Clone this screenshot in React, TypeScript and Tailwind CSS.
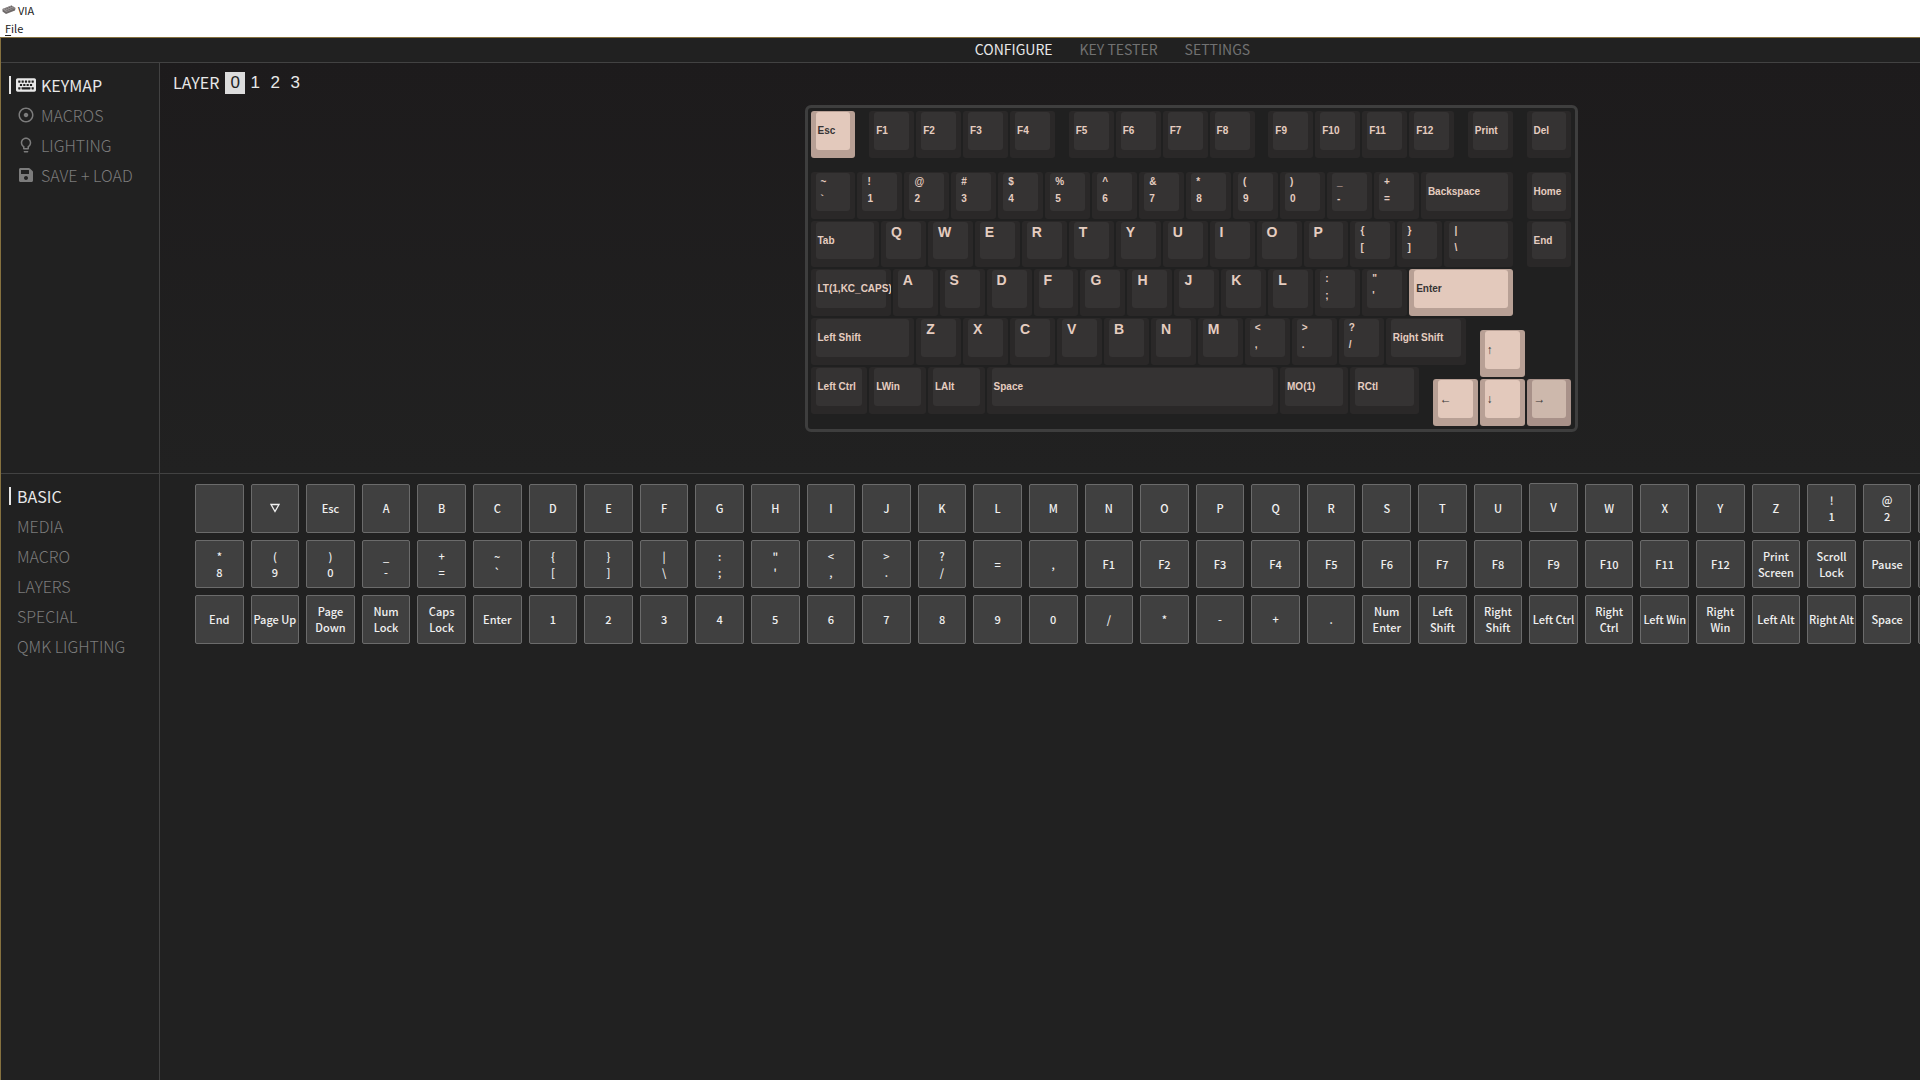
import React from "react";
import { FaKeyboard, FaSave } from "react-icons/fa";
import { MdAdjust, MdLightbulbOutline } from "react-icons/md";

const sans = "font-['Noto_Sans_CJK_SC','Noto_Sans',sans-serif]";
const arial = "font-['Liberation_Sans',Arial,sans-serif]";

type Tone = "dark" | "light" | "selected";
type Cap = { x: number; y: number; w: number; label: string; tone: Tone };

const cap = (x: number, y: number, w: number, label: string, tone: Tone = "dark"): Cap => ({ x, y, w, label, tone });
const run = (x: number, y: number, labels: string[]) => labels.map((l, i) => cap(x + i, y, 1, l));

/* Positions and widths are in key units. */
const caps: Cap[] = [
  cap(0, 0, 1, "Esc", "light"),
  ...run(1.25, 0, ["F1", "F2", "F3", "F4"]),
  ...run(5.5, 0, ["F5", "F6", "F7", "F8"]),
  ...run(9.75, 0, ["F9", "F10", "F11", "F12"]),
  cap(14, 0, 1, "Print"),
  cap(15.25, 0, 1, "Del"),
  ...run(0, 1.25, ["~\n`", "!\n1", "@\n2", "#\n3", "$\n4", "%\n5", "^\n6", "&\n7", "*\n8", "(\n9", ")\n0", "_\n-", "+\n="]),
  cap(13, 1.25, 2, "Backspace"),
  cap(15.25, 1.25, 1, "Home"),
  cap(0, 2.25, 1.5, "Tab"),
  ...run(1.5, 2.25, ["Q", "W", "E", "R", "T", "Y", "U", "I", "O", "P", "{\n[", "}\n]"]),
  cap(13.5, 2.25, 1.5, "|\n\\"),
  cap(15.25, 2.25, 1, "End"),
  cap(0, 3.25, 1.75, "LT(1,KC_CAPS)"),
  ...run(1.75, 3.25, ["A", "S", "D", "F", "G", "H", "J", "K", "L", ":\n;", "\"\n'"]),
  cap(12.75, 3.25, 2.25, "Enter", "light"),
  cap(0, 4.25, 2.25, "Left Shift"),
  ...run(2.25, 4.25, ["Z", "X", "C", "V", "B", "N", "M", "<\n,", ">\n.", "?\n/"]),
  cap(12.25, 4.25, 1.75, "Right Shift"),
  cap(14.25, 4.5, 1, "↑", "light"),
  cap(0, 5.25, 1.25, "Left Ctrl"),
  cap(1.25, 5.25, 1.25, "LWin"),
  cap(2.5, 5.25, 1.25, "LAlt"),
  cap(3.75, 5.25, 6.25, "Space"),
  cap(10, 5.25, 1.5, "MO(1)"),
  cap(11.5, 5.25, 1.5, "RCtl"),
  cap(13.25, 5.5, 1, "←", "light"),
  cap(14.25, 5.5, 1, "↓", "light"),
  cap(15.25, 5.5, 1, "→", "selected"),
];

const baseTone: Record<Tone, string> = {
  dark: "bg-[#2a2828] text-[#e5cdc0]",
  light: "bg-[#b8a095] text-[#363434]",
  selected: "bg-[#a89189] text-[#363434]",
};
const topTone: Record<Tone, string> = {
  dark: "bg-[#353333]",
  light: "bg-[#e3c9bc]",
  selected: "bg-[#cdb8ac]",
};

function Legend({ label }: { label: string }) {
  if (label.includes("\n")) {
    const [a, b] = label.split("\n");
    return (
      <span className="flex flex-col pl-[5px] text-[10px] leading-[17px]">
        <span>{a}</span>
        <span>{b}</span>
      </span>
    );
  }
  if (/^[A-Z]$/.test(label)) return <span className="block pt-0.5 pl-[5px] text-sm leading-4">{label}</span>;
  if (/^[←↑→↓]$/.test(label)) return <span className="block pt-[11px] pl-0.5 text-xs leading-4 font-normal">{label}</span>;
  return <span className="block pt-[11px] pl-0.5 text-[10px] leading-4 whitespace-nowrap">{label}</span>;
}

function Keycap({ k }: { k: Cap }) {
  return (
    <button
      type="button"
      className={"mr-0.5 mb-0.5 flex min-w-0 overflow-hidden rounded-[3px] px-[5px] pt-px pb-2 text-left font-bold " + baseTone[k.tone]}
      style={{
        gridColumn: `${k.x * 4 + 1} / span ${k.w * 4}`,
        gridRow: `${k.y * 4 + 1} / span 4`,
      }}
    >
      <span className={"h-full w-full min-w-0 rounded-[3px] " + topTone[k.tone]}>
        <Legend label={k.label} />
      </span>
    </button>
  );
}

const pickerRows: string[][] = [
  ["", "▽", "Esc", "A", "B", "C", "D", "E", "F", "G", "H", "I", "J", "K", "L", "M", "N", "O", "P", "Q", "R", "S", "T", "U", "V", "W", "X", "Y", "Z", "!\n1", "@\n2", ""],
  ["*\n8", "(\n9", ")\n0", "_\n-", "+\n=", "~\n`", "{\n[", "}\n]", "|\n\\", ":\n;", "\"\n'", "<\n,", ">\n.", "?\n/", "=", ",", "F1", "F2", "F3", "F4", "F5", "F6", "F7", "F8", "F9", "F10", "F11", "F12", "Print\nScreen", "Scroll\nLock", "Pause", ""],
  ["End", "Page Up", "Page\nDown", "Num\nLock", "Caps\nLock", "Enter", "1", "2", "3", "4", "5", "6", "7", "8", "9", "0", "/", "*", "-", "+", ".", "Num\nEnter", "Left\nShift", "Right\nShift", "Left Ctrl", "Right\nCtrl", "Left Win", "Right\nWin", "Left Alt", "Right Alt", "Space", ""],
];

function PickerKey({ label }: { label: string }) {
  const raised = label === "V";
  return (
    <button
      type="button"
      className={
        "flex aspect-square min-w-0 items-center justify-center rounded-[2px] border border-[#6b6b6b] bg-[#404040] text-center text-[11px] leading-4 font-medium whitespace-pre text-[#f0f0f0]" +
        (raised ? " -translate-y-px" : "")
      }
    >
      {label === "▽" ? (
        <svg viewBox="0 0 10 10" className="size-2.5" aria-label="Transparent">
          <path d="M1 1.5 H9 L5 8.5 Z" fill="none" stroke="#f0f0f0" strokeWidth="1.3" />
        </svg>
      ) : (
        label
      )}
    </button>
  );
}

const modes = [
  { label: "KEYMAP", icon: <FaKeyboard className="size-5" />, active: true },
  { label: "MACROS", icon: <MdAdjust className="size-[18px]" /> },
  { label: "LIGHTING", icon: <MdLightbulbOutline className="size-[18px]" /> },
  { label: "SAVE + LOAD", icon: <FaSave className="size-4" /> },
];
const categories = ["BASIC", "MEDIA", "MACRO", "LAYERS", "SPECIAL", "QMK LIGHTING"];

function SideItem({ label, icon, active }: { label: string; icon?: React.ReactNode; active?: boolean }) {
  return (
    <li className="flex h-[30px] items-center">
      <span className={"h-[18px] w-0.5 " + (active ? "bg-[#e8e8e8]" : "")} />
      <button
        type="button"
        className={"flex items-center text-base leading-[18px] whitespace-nowrap " + (icon ? "gap-[3px] pl-[3px] " : "pl-1.5 ") + (active ? "text-[#e8e8e8]" : "font-light text-[#7c7c7c]")}
      >
        {icon && <span className="flex w-6 justify-center">{icon}</span>}
        {label}
      </button>
    </li>
  );
}

export default function App() {
  return (
    <div className={"flex h-screen flex-col overflow-hidden bg-[#212121] " + sans}>
      <header className="h-[37px] shrink-0 bg-white pl-0.5 text-[11px] text-[#222]">
        <div className="flex h-5 items-center gap-0.5 leading-5">
          <svg viewBox="0 0 14 10" className="h-2.5 w-3.5">
            <path d="M0.5 4 L9.5 0.5 L13.5 3 L13 5.5 L4 9 L0.5 6.5 Z" fill="#6f6a6a" />
            <path d="M0.5 4 L9.5 0.5 L13.5 3 L4.2 7 Z" fill="#9a9595" />
            <path d="M3 4.2 L10 1.4 M4.5 5.6 L11.8 2.8" stroke="#5a5656" strokeWidth="0.8" strokeDasharray="1.5 0.6" />
          </svg>
          <span>VIA</span>
        </div>
        <button type="button" className="block pl-[3px] text-[11px] leading-4">
          <span className="underline underline-offset-2">F</span>ile
        </button>
      </header>

      <div className="flex min-h-0 flex-1 flex-col border-t border-l border-[#85713f]">
        <nav className="flex h-[25px] shrink-0 items-center justify-center gap-[27px] border-b border-[#424242] pb-0.5 pl-76 text-sm">
          <a href="#configure" className="text-[#e8e8e8]">CONFIGURE</a>
          <a href="#tester" className="text-[#717171]">KEY TESTER</a>
          <a href="#settings" className="text-[#717171]">SETTINGS</a>
        </nav>

        <section className="flex h-[411px] shrink-0 border-b border-[#424242]">
          <ul className="w-[159px] shrink-0 border-r border-[#424242] pt-[7px] pl-2">
            {modes.map((m) => (
              <SideItem key={m.label} {...m} />
            ))}
          </ul>
          <div className="relative flex flex-1 justify-center bg-linear-to-b from-[#1d1b1c] to-[#212121] pt-[42px] pl-[302px]">
            <div className="absolute top-[9px] left-[13px] flex items-start text-base text-[#e8e8e8]">
              <span className="mr-1.5 leading-5">LAYER</span>
              {[0, 1, 2, 3].map((n) => (
                <button
                  key={n}
                  type="button"
                  className={"h-[22px] w-5 text-[17px] leading-[22px] " + arial + (n === 0 ? " bg-[#dcdcdc] text-[#212121]" : "")}
                >
                  {n}
                </button>
              ))}
            </div>
            <div className="h-fit rounded-md border-[3px] border-[#3e3e3e] bg-[#202020] pt-[3px] pr-px pb-px pl-[3px]">
              <div className={"grid h-[317px] w-[763px] grid-cols-[repeat(65,minmax(0,1fr))] grid-rows-[repeat(26,minmax(0,1fr))] " + arial}>
                {caps.map((k) => (
                  <Keycap key={k.x + "-" + k.y} k={k} />
                ))}
              </div>
            </div>
          </div>
        </section>

        <section className="flex min-h-0 flex-1">
          <ul className="w-[159px] shrink-0 border-r border-[#424242] pt-[7px] pl-2">
            {categories.map((c, i) => (
              <SideItem key={c} label={c} active={i === 0} />
            ))}
          </ul>
          <div className="min-w-0 flex-1 overflow-hidden pt-[10px] pl-[35px]">
            <div className="-mr-[47px] grid grid-cols-[repeat(32,minmax(0,1fr))] gap-[7px]">
              {pickerRows.flatMap((row, r) => row.map((label, i) => <PickerKey key={r + "-" + i} label={label} />))}
            </div>
          </div>
        </section>
      </div>
    </div>
  );
}
